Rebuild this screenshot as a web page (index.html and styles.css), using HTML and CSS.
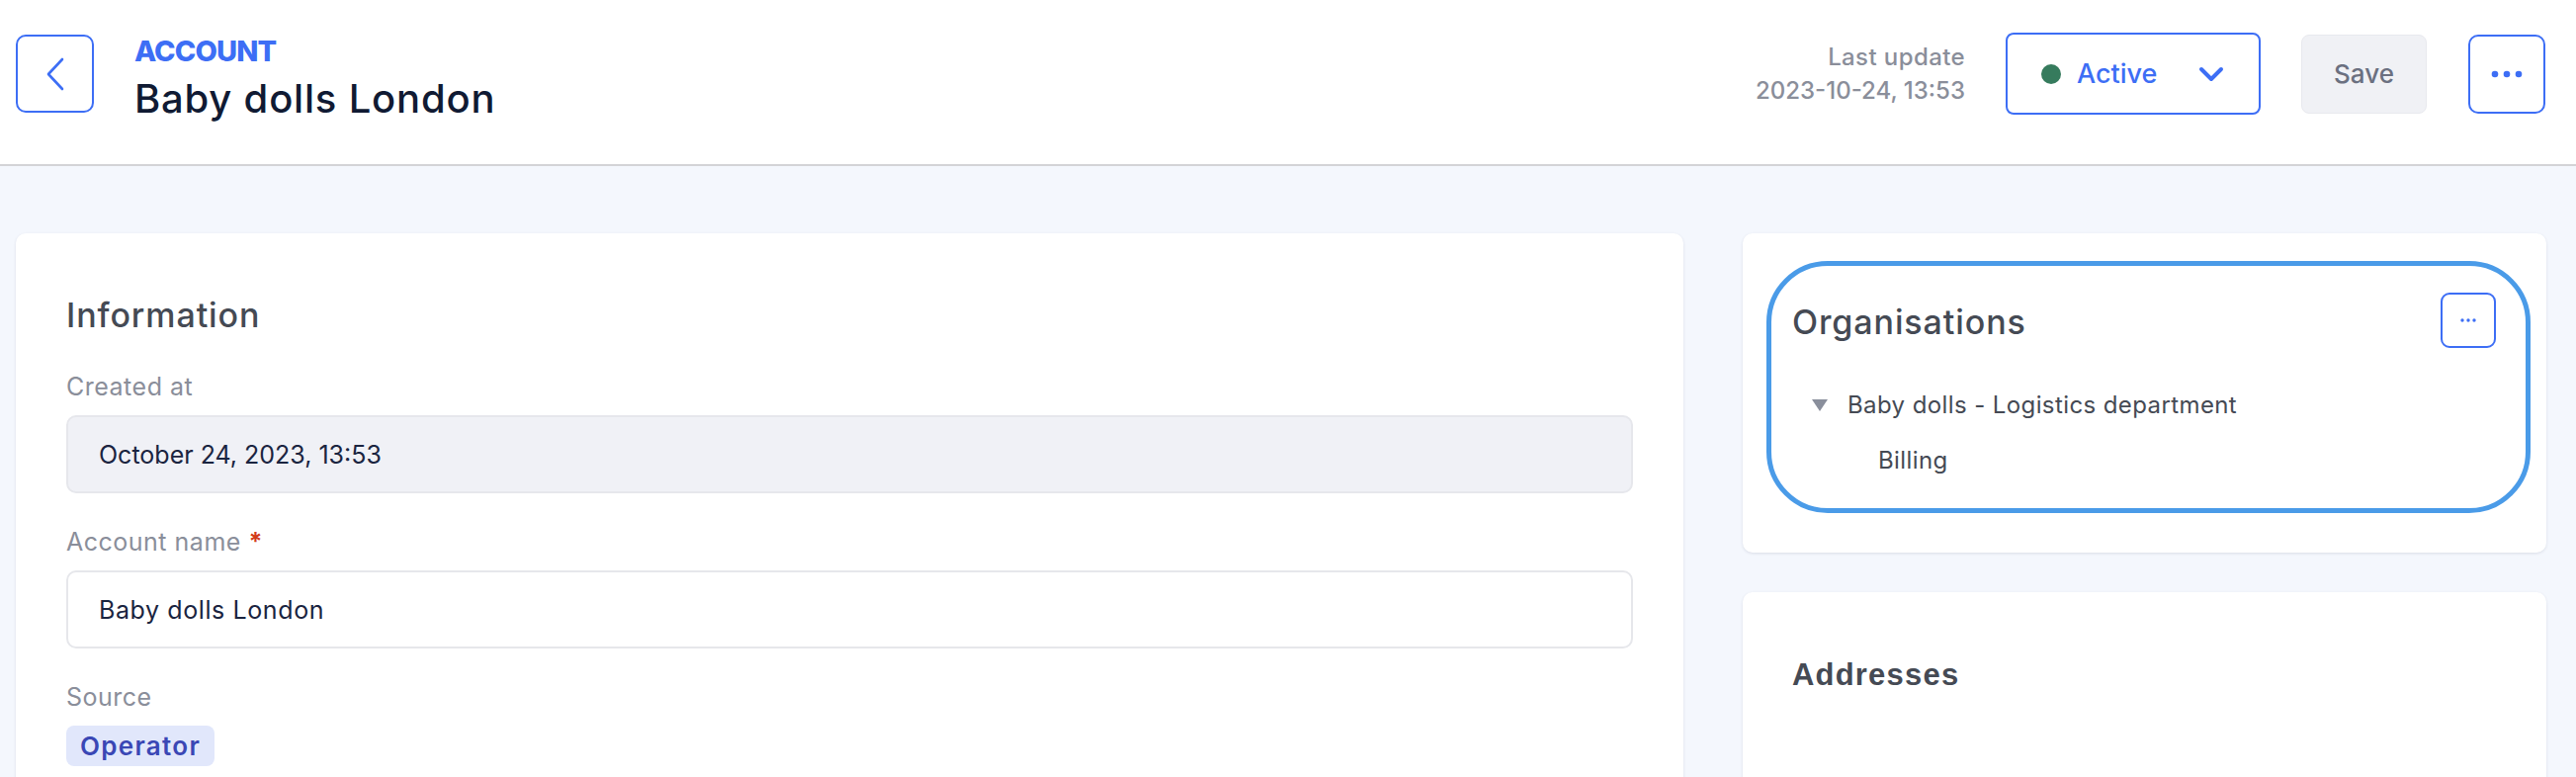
FILE: index.html
```html
<!DOCTYPE html>
<html lang="en">
<head>
<meta charset="utf-8">
<title>Account - Baby dolls London</title>
<link rel="stylesheet" href="styles.css">
</head>
<body>
<header class="topbar">
  <button class="back-btn" aria-label="Back">
    <svg width="22" height="36" viewBox="0 0 22 36"><path d="M18 3 L4 18 L18 33" fill="none" stroke="#3d6ef5" stroke-width="2.6" stroke-linecap="round" stroke-linejoin="round"/></svg>
  </button>
  <div class="title-block">
    <div class="eyebrow">ACCOUNT</div>
    <h1 class="page-title">Baby dolls London</h1>
  </div>
  <div class="spacer"></div>
  <div class="last-update">
    <div class="lu-label">Last update</div>
    <div class="lu-date">2023-10-24, 13:53</div>
  </div>
  <button class="status-btn">
    <span class="dot"></span>
    <span class="status-text">Active</span>
    <svg class="chev" width="26" height="16" viewBox="0 0 26 16"><path d="M3 3 L13 13 L23 3" fill="none" stroke="#3d6ef5" stroke-width="4" stroke-linecap="round" stroke-linejoin="round"/></svg>
  </button>
  <button class="save-btn">Save</button>
  <button class="more-btn" aria-label="More">
    <svg width="32" height="8" viewBox="0 0 32 8"><circle cx="4" cy="4" r="3.3" fill="#3d6ef5"/><circle cx="16" cy="4" r="3.3" fill="#3d6ef5"/><circle cx="28" cy="4" r="3.3" fill="#3d6ef5"/></svg>
  </button>
</header>

<main class="content">
  <section class="card info-card">
    <h2 class="card-title">Information</h2>
    <div class="field first">
      <label class="field-label">Created at</label>
      <div class="input input-disabled">October 24, 2023, 13:53</div>
    </div>
    <div class="field">
      <label class="field-label">Account name <span class="req">*</span></label>
      <div class="input">Baby dolls London</div>
    </div>
    <div class="field">
      <label class="field-label">Source</label>
      <div><span class="badge">Operator</span></div>
    </div>
  </section>

  <aside class="side">
    <section class="card org-card">
      <div class="org-ring">
        <div class="org-head">
          <h2 class="card-title">Organisations</h2>
          <button class="small-more" aria-label="More">
            <svg width="16" height="4" viewBox="0 0 16 4"><circle cx="2" cy="2" r="1.7" fill="#3d6ef5"/><circle cx="8" cy="2" r="1.7" fill="#3d6ef5"/><circle cx="14" cy="2" r="1.7" fill="#3d6ef5"/></svg>
          </button>
        </div>
        <div class="tree">
          <div class="tree-row">
            <svg class="caret" width="18" height="14" viewBox="0 0 18 14"><path d="M1 1 L17 1 L9 13 Z" fill="#8a8f9c"/></svg>
            <span>Baby dolls - Logistics department</span>
          </div>
          <div class="tree-row child">Billing</div>
        </div>
      </div>
    </section>
    <section class="card addr-card">
      <h2 class="addr-title">Addresses</h2>
    </section>
  </aside>
</main>
</body>
</html>
```

FILE: styles.css
```css
* { box-sizing: border-box; }
html, body { margin: 0; padding: 0; }
body {
  background: #f4f7fd;
  font-family: "Inter", "Open Sans", sans-serif;
  color: #1a2238;
  width: 2606px;
  height: 786px;
  overflow: hidden;
}
button { font-family: inherit; cursor: pointer; }

.topbar {
  height: 168px;
  background: #fff;
  border-bottom: 2px solid #d3d3d6;
  display: flex;
  align-items: center;
  padding: 0 31px 17px 16px;
}
.back-btn {
  width: 79px; height: 79px;
  border: 2px solid #3d6ef5;
  border-radius: 10px;
  background: #fff;
  display: flex; align-items: center; justify-content: center;
  margin: 0 41px 0 0;
  padding: 0;
}
.title-block { display: flex; flex-direction: column; margin-top: 8px; }
.eyebrow {
  color: #3d6ef5;
  font-weight: 800;
  font-size: 29px;
  line-height: 34px;
  letter-spacing: -0.9px;
}
.page-title {
  margin: 8px 0 0 0;
  font-size: 40px;
  font-weight: 500;
  line-height: 46px;
  color: #101a33;
  letter-spacing: 0.8px;
}
.spacer { flex: 1; }
.last-update { text-align: right; color: #8a8e9a; font-size: 24px; font-weight: 500; margin-right: 41px; }
.lu-label { line-height: 34px; letter-spacing: 0.4px; }
.lu-date { line-height: 34px; }
.status-btn {
  width: 258px; height: 83px;
  border: 2px solid #3d6ef5;
  border-radius: 8px;
  background: #fff;
  display: flex; align-items: center;
  padding: 0 0 0 34px;
  margin-right: 41px;
}
.dot { width: 20px; height: 20px; border-radius: 50%; background: #367b5d; margin-right: 16px; }
.status-text { color: #3d6ef5; font-size: 27px; font-weight: 500; }
.chev { margin-left: 42px; }
.save-btn {
  width: 127px; height: 80px;
  border: 1px solid #e8e9ee;
  border-radius: 8px;
  background: #f0f1f5;
  color: #6b7080;
  font-size: 26px;
  font-weight: 500;
  margin-right: 42px;
}
.more-btn {
  width: 78px; height: 80px;
  border: 2px solid #3d6ef5;
  border-radius: 10px;
  background: #fff;
  display: flex; align-items: center; justify-content: center;
  padding: 0;
}

.content {
  display: grid;
  grid-template-columns: 1687px 813px;
  column-gap: 60px;
  padding: 68px 0 0 16px;
  align-items: start;
}
.card {
  background: #fff;
  border-radius: 10px;
  box-shadow: 0 1px 3px rgba(30, 40, 70, 0.12);
}
.info-card {
  padding: 63px 51px 40px 51px;
  height: 700px;
}
.card-title {
  margin: 0;
  font-size: 34px;
  font-weight: 500;
  color: #454a54;
  line-height: 40px;
  letter-spacing: 0.9px;
}
.field { margin-top: 34px; }
.field.first { margin-top: 37px; }
.field-label {
  display: block;
  color: #8a8e9a;
  font-size: 25px;
  line-height: 30px;
  margin-bottom: 14px;
  letter-spacing: 0.5px;
}
.req { color: #d23c1a; font-weight: 700; }
.input {
  height: 79px;
  border: 2px solid #e6e7eb;
  border-radius: 10px;
  padding: 0 31px;
  display: flex; align-items: center;
  font-size: 25px;
  color: #1a2440;
  background: #fff;
  letter-spacing: 0.6px;
}
.input-disabled { background: #f0f1f6; border-color: #e6e7ec; letter-spacing: 0; }
.badge {
  display: inline-block;
  background: #e1e7fb;
  color: #3a47b5;
  font-weight: 600;
  font-size: 26px;
  line-height: 41px;
  padding: 0 14px;
  border-radius: 8px;
  letter-spacing: 1.3px;
}

.side { display: flex; flex-direction: column; gap: 40px; }
.org-card { padding: 28px 16px 40px 24px; }
.org-ring {
  border: 5px solid #4a9be8;
  border-radius: 62px;
  padding: 27px 30px 34px 21px;
  height: 255px;
}
.org-head { display: flex; justify-content: space-between; align-items: flex-start; }
.org-head .card-title { margin-top: 10px; }
.small-more {
  width: 56px; height: 56px;
  border: 2px solid #3d6ef5;
  border-radius: 9px;
  background: #fff;
  display: flex; align-items: center; justify-content: center;
  padding: 0;
}
.tree { margin-top: 41px; font-size: 24px; color: #454a54; letter-spacing: 0.4px; }
.tree-row { display: flex; align-items: center; line-height: 34px; }
.caret { margin: 0 19px 0 19px; }
.tree-row.child { padding-left: 87px; margin-top: 22px; }
.addr-card { height: 240px; padding: 66px 50px; }
.addr-title {
  margin: 0;
  font-family: "Liberation Sans", Arial, sans-serif;
  font-size: 31px;
  font-weight: 700;
  color: #454a54;
  letter-spacing: 1.2px;
}
```
